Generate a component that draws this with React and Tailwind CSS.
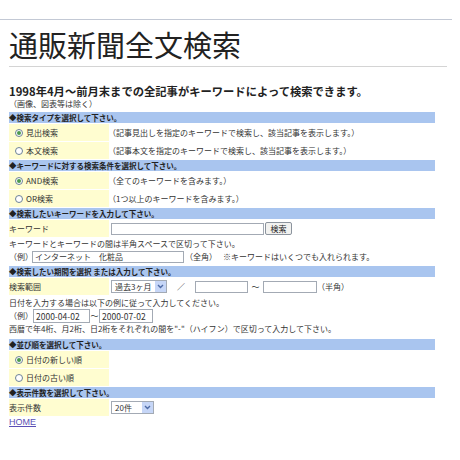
import React from 'react';

const Bar = ({ children, className = '' }) => (
  <div className={`w-[426px] h-[11px] bg-[#a9c5ef] text-[7.5px] leading-[11px] font-bold text-[#222] ${className}`}>
    {children}
  </div>
);

const Row = ({ label, children }) => (
  <div className="flex h-[17px] mt-px">
    <div className="w-[100px] h-full bg-[#fffdd0] flex items-center">{label}</div>
    <div className="ml-px flex items-center">{children}</div>
  </div>
);

const Radio = ({ checked, text }) => (
  <div className="flex items-center">
    <span className="ml-[6px] w-[8px] h-[8px] rounded-full border border-[#6d8297] bg-white flex items-center justify-center">
      {checked && <span className="w-[4px] h-[4px] rounded-full bg-[#4c9a4c]"></span>}
    </span>
    <span className="ml-[3px]">{text}</span>
  </div>
);

const Box = ({ className = '', children }) => (
  <div className={`h-[12px] border border-[#a3aab4] bg-white flex items-center px-[2px] ${className}`}>
    {children}
  </div>
);

const Select = ({ value, className = '' }) => (
  <div className={`h-[13px] border border-[#a3aab4] bg-white flex items-center justify-between ${className}`}>
    <span className="pl-[3px]">{value}</span>
    <span className="w-[11px] h-[11px] bg-[#c6d6f7] flex items-center justify-center">
      <svg width="7" height="5" viewBox="0 0 7 5">
        <path d="M1 1l2.5 2.5L6 1" fill="none" stroke="#4d6aa5" strokeWidth="1.4" />
      </svg>
    </span>
  </div>
);

export default function App() {
  return (
    <div className="w-[460px] h-[460px] bg-white text-[#333] text-[8px] font-['Noto_Sans_CJK_JP',sans-serif] overflow-hidden pt-[19px]">
      <div className="w-[452px] h-px bg-[#c3c9d5]"></div>
      <div className="px-[9px]">
        <div className="w-[438px] h-[47px] border-b border-[#d4d4d4] pt-[9px] text-[29px] leading-[30px] text-[#222]">
          通販新聞全文検索
        </div>
        <div className="mt-[18px] text-[11.3px] leading-[13px] font-bold text-[#222]">
          1998年4月～前月末までの全記事がキーワードによって検索できます。
        </div>
        <div className="leading-[11px]">（画像、図表等は除く）</div>

        <Bar className="mt-[3px]">◆検索タイプを選択して下さい。</Bar>
        <Row label={<Radio checked text="見出検索" />}>
          <span className="-ml-[2px]">（記事見出しを指定のキーワードで検索し、該当記事を表示します。）</span>
        </Row>
        <Row label={<Radio text="本文検索" />}>
          <span className="-ml-[2px]">（記事本文を指定のキーワードで検索し、該当記事を表示します。）</span>
        </Row>

        <Bar className="mt-px">◆キーワードに対する検索条件を選択して下さい。</Bar>
        <Row label={<Radio checked text="AND検索" />}>
          <span className="-ml-[2px]">（全てのキーワードを含みます。）</span>
        </Row>
        <Row label={<Radio text="OR検索" />}>
          <span className="-ml-[2px]">（1つ以上のキーワードを含みます。）</span>
        </Row>

        <Bar className="mt-px">◆検索したいキーワードを入力して下さい。</Bar>
        <Row label={<span>キーワード</span>}>
          <Box className="ml-px w-[153px]" />
          <button className="ml-px h-[13px] w-[27px] border border-[#8c949e] rounded-[2px] bg-[#f2f2f0] text-[8px] leading-[11px] text-[#222]">
            検索
          </button>
        </Row>
        <div className="h-[13px] leading-[13px]">キーワードとキーワードの間は半角スペースで区切って下さい。</div>
        <div className="flex items-center h-[13px]">
          <span className="w-[23px]">（例）</span>
          <Box className="w-[152px]">インターネット　化粧品</Box>
          <span className="ml-px">（全角）</span>
          <span className="ml-[6px]">※キーワードはいくつでも入れられます。</span>
        </div>

        <Bar className="mt-[3px]">◆検索したい期間を選択 または入力して下さい。</Bar>
        <Row label={<span>検索範囲</span>}>
          <Select value="過去3ヶ月" className="ml-px w-[56px]" />
          <span className="w-[28px] text-center">／</span>
          <Box className="w-[53px]" />
          <span className="w-[15px] text-center">～</span>
          <Box className="w-[54px]" />
          <span>（半角）</span>
        </Row>
        <div className="mt-[2px] h-[12px] leading-[12px]">日付を入力する場合は以下の例に従って入力してください。</div>
        <div className="flex items-center h-[14px]">
          <span className="w-[24px]">（例）</span>
          <Box className="w-[57px] h-[14px] text-[8.5px]">2000-04-02</Box>
          <span className="w-[9px] text-center">～</span>
          <Box className="w-[54px] h-[14px] text-[8.5px]">2000-07-02</Box>
        </div>
        <div className="h-[12px] leading-[12px]">
          西暦で年4桁、月2桁、日2桁をそれぞれの間を"-"（ハイフン）で区切って入力して下さい。
        </div>

        <Bar className="mt-[4px]">◆並び順を選択して下さい。</Bar>
        <Row label={<Radio checked text="日付の新しい順" />} />
        <Row label={<Radio text="日付の古い順" />} />

        <Bar className="mt-px">◆表示件数を選択して下さい。</Bar>
        <Row label={<span>表示件数</span>}>
          <Select value="20件" className="ml-px w-[43px]" />
        </Row>
        <a href="#" className="block h-[12px] leading-[12px] text-[9px] font-['Liberation_Sans',sans-serif] text-[#5a4fb5] underline">
          HOME
        </a>
      </div>
    </div>
  );
}
